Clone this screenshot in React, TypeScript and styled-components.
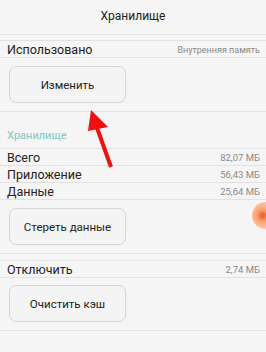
import React from 'react'
import styled, { createGlobalStyle } from 'styled-components'

const GlobalStyle = createGlobalStyle`
  * { box-sizing: border-box; }
  html, body { margin: 0; padding: 0; background: #f5f5f5; }
  body { font-family: Roboto, "Noto Sans", sans-serif; color: #222; }
`

const Screen = styled.div`
  position: relative;
  width: 266px;
  height: 352px;
  overflow: hidden;
  background: #f5f5f5;
`

const Header = styled.div`
  height: 35px;
  display: flex;
  align-items: center;
  justify-content: center;
  padding-bottom: 3px;
  font-size: 12px;
  color: #222;
  border-bottom: 1px solid #e2e2e2;
`

const Gap = styled.div<{ $h: number }>`
  height: ${(p) => p.$h}px;
  border-bottom: 1px solid #e2e2e2;
`

const SectionTitle = styled.div`
  height: 37px;
  display: flex;
  align-items: center;
  padding: 10px 7px 0;
  font-size: 11px;
  color: #7fc6c6;
  border-bottom: 1px solid #e2e2e2;
`

const Row = styled.div`
  height: 17px;
  display: flex;
  align-items: center;
  justify-content: space-between;
  padding: 1px 6px 0 7px;
  border-bottom: 1px solid #e2e2e2;
`

const Label = styled.span`
  font-size: 12.5px;
  color: #222;
`

const Value = styled.span<{ $small?: boolean }>`
  font-size: ${(p) => (p.$small ? '9px' : '9.5px')};
  color: #8a8a8a;
`

const ButtonArea = styled.div<{ $top: number; $bottom: number }>`
  padding: ${(p) => p.$top}px 9px ${(p) => p.$bottom}px;
  border-bottom: 1px solid #e2e2e2;
`

const ActionButton = styled.button`
  display: flex;
  align-items: center;
  justify-content: center;
  width: 117px;
  height: 37px;
  padding: 0;
  border: 1px solid #d4d4d4;
  border-radius: 7px;
  background: #f4f4f4;
  font-family: Roboto, "Noto Sans", sans-serif;
  font-size: 11.5px;
  color: #222;
`

const Arrow = styled.svg`
  position: absolute;
  left: 80px;
  top: 105px;
`

const Touch = styled.div`
  position: absolute;
  left: 252px;
  top: 202px;
  width: 27px;
  height: 27px;
  border-radius: 50%;
  background: radial-gradient(circle at 40% 50%, #f06a3c 0 2.5px, #f7925c 4.5px, #f9ad80 8px, #fbc7a2 13px);
`

export default function App() {
  return (
    <Screen>
      <GlobalStyle />
      <Header>Хранилище</Header>
      <Gap $h={6} />
      <Row>
        <Label>Использовано</Label>
        <Value $small>Внутренняя память</Value>
      </Row>
      <ButtonArea $top={8} $bottom={8}>
        <ActionButton>Изменить</ActionButton>
      </ButtonArea>
      <SectionTitle>Хранилище</SectionTitle>
      <Row>
        <Label>Всего</Label>
        <Value>82,07 МБ</Value>
      </Row>
      <Row>
        <Label>Приложение</Label>
        <Value>56,43 МБ</Value>
      </Row>
      <Row>
        <Label>Данные</Label>
        <Value>25,64 МБ</Value>
      </Row>
      <ButtonArea $top={8} $bottom={8}>
        <ActionButton>Стереть данные</ActionButton>
      </ButtonArea>
      <Gap $h={7} />
      <Row>
        <Label>Отключить</Label>
        <Value>2,74 МБ</Value>
      </Row>
      <ButtonArea $top={7} $bottom={8}>
        <ActionButton>Очистить кэш</ActionButton>
      </ButtonArea>

      <Arrow width="40" height="70" viewBox="0 0 40 70">
        <line x1="31" y1="62" x2="16" y2="20" stroke="#ee1111" strokeWidth="4" />
        <polygon points="11,5 28,22 8,26" fill="#ee1111" />
      </Arrow>
      <Touch />
    </Screen>
  )
}
